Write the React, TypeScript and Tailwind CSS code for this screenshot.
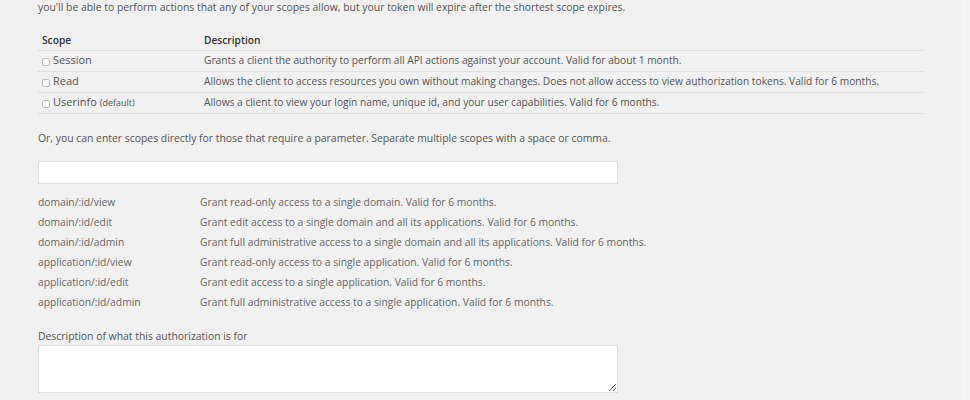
import React from "react";

const scopes = [
    { name: "Session", note: "", desc: "Grants a client the authority to perform all API actions against your account. Valid for about 1 month." },
    { name: "Read", note: "", desc: "Allows the client to access resources you own without making changes. Does not allow access to view authorization tokens. Valid for 6 months." },
    { name: "Userinfo", note: "(default)", desc: "Allows a client to view your login name, unique id, and your user capabilities. Valid for 6 months." },
];

const params = [
    ["domain/:id/view", "Grant read-only access to a single domain. Valid for 6 months."],
    ["domain/:id/edit", "Grant edit access to a single domain and all its applications. Valid for 6 months."],
    ["domain/:id/admin", "Grant full administrative access to a single domain and all its applications. Valid for 6 months."],
    ["application/:id/view", "Grant read-only access to a single application. Valid for 6 months."],
    ["application/:id/edit", "Grant edit access to a single application. Valid for 6 months."],
    ["application/:id/admin", "Grant full administrative access to a single application. Valid for 6 months."],
];

export default function App() {
    return (
        <div className="flex h-[400px] w-[970px] bg-[#f4f4f4] text-[#555]" style={{ fontFamily: '"Open Sans", sans-serif' }}>
            <div className="w-[961px] shrink-0 bg-[#f1f1f1] pl-[38px] pr-[38px]">
                <p className="mt-[1px] text-[10.4px] leading-[13px]">
                    you'll be able to perform actions that any of your scopes allow, but your token will expire after the shortest scope expires.
                </p>

                <table className="mt-[18px] w-[885px] border-collapse text-[10.2px]">
                    <thead>
                        <tr className="border-b border-[#dedede]">
                            <th className="h-[18px] w-[166px] pl-[4px] pb-[1px] text-left align-middle font-semibold text-[#333]">Scope</th>
                            <th className="pb-[1px] text-left align-middle font-semibold text-[#333]">Description</th>
                        </tr>
                    </thead>
                    <tbody>
                        {scopes.map((s) => (
                            <tr key={s.name} className="h-[21px] border-b border-[#dedede]">
                                <td className="pl-[4px] align-middle">
                                    <label className="flex items-center gap-[3px] text-[11px] text-[#555]">
                                        <span className="mt-[2px] inline-block h-[8px] w-[8px] rounded-[2px] border border-[#bbb] bg-white" />
                                        {s.name}
                                        {s.note && <span className="text-[9px]">{s.note}</span>}
                                    </label>
                                </td>
                                <td className="align-middle text-[#555]">{s.desc}</td>
                            </tr>
                        ))}
                    </tbody>
                </table>

                <p className="mt-[18px] text-[10.4px] leading-[13px]">
                    Or, you can enter scopes directly for those that require a parameter. Separate multiple scopes with a space or comma.
                </p>

                <input type="text" className="mt-[16px] block h-[23px] w-[580px] border border-[#ddd] bg-white outline-none" />

                <div className="mt-[9px] flex flex-col text-[10.3px] text-[#666]">
                    {params.map(([k, v]) => (
                        <div key={k} className="flex h-[20px] items-center">
                            <span className="w-[162px] shrink-0">{k}</span>
                            <span>{v}</span>
                        </div>
                    ))}
                </div>

                <label className="mt-[17px] block text-[10.4px] leading-[13px]">Description of what this authorization is for</label>
                <textarea className="mt-[2px] block h-[48px] w-[580px] resize border border-[#ddd] bg-white outline-none" />
            </div>
        </div>
    );
}
